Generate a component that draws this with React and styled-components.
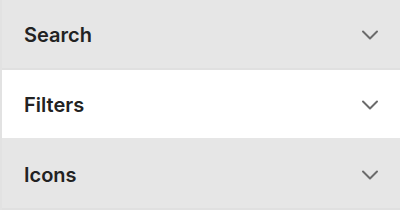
import React from "react";
import styled, { createGlobalStyle } from "styled-components";

const Global = createGlobalStyle`
  html, body { margin: 0; padding: 0; background: #ffffff; }
  body { font-family: Inter, "Noto Sans", sans-serif; }
`;

const List = styled.div`
  width: 400px;
  display: flex;
  flex-direction: column;
  border-left: 2px solid #e2e2e2;
  box-sizing: border-box;
`;

const Row = styled.button`
  all: unset;
  box-sizing: border-box;
  height: 70px;
  display: flex;
  align-items: center;
  justify-content: space-between;
  padding: 2px 16px 0 22px;
  background: ${(p) => (p.$active ? "#ffffff" : "#e6e6e6")};
  border-bottom: 2px solid ${(p) => (p.$active ? "#e6e6e6" : "#e0e0e0")};
  cursor: pointer;
`;

const Label = styled.span`
  font-family: Inter, "Noto Sans", sans-serif;
  font-size: 20px;
  font-weight: 600;
  color: #222222;
`;

const Chevron = () => (
  <svg width="28" height="28" viewBox="0 0 24 24" fill="none" stroke="#6b6b6b" strokeWidth="1.7" strokeLinecap="round" strokeLinejoin="round">
    <path d="M6 9l6 6 6-6" />
  </svg>
);

const items = [
  { label: "Search", active: false },
  { label: "Filters", active: true },
  { label: "Icons", active: false },
];

export default function App() {
  return (
    <>
      <Global />
      <List>
        {items.map((it) => (
          <Row key={it.label} $active={it.active}>
            <Label>{it.label}</Label>
            <Chevron />
          </Row>
        ))}
      </List>
    </>
  );
}
